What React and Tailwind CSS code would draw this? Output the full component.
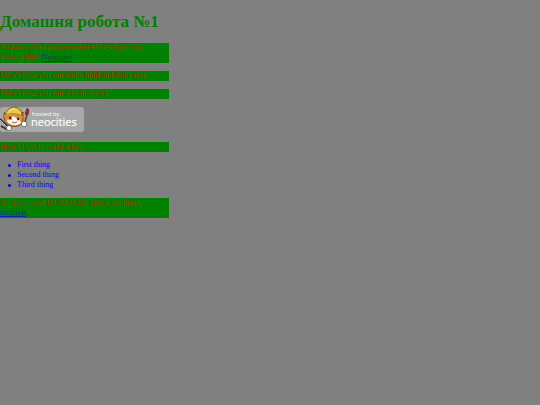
import React from "react";

const things = ["First thing", "Second thing", "Third thing"];

function Paragraph({ color = "text-[#a83000]", children }) {
  return <p className={`bg-[#008000] pr-3 ${color}`}>{children}</p>;
}

function NeocitiesBadge() {
  return (
    <svg viewBox="0 0 84 27" className="block h-[27px] w-[84px]">
      <rect x="0" y="0" width="84" height="25" rx="3" fill="#a9a9a9" />
      {/* tools in the left paw */}
      <path d="M0 12 L10 22 M1 19 L8 23" stroke="#333" strokeWidth="1.8" />
      <path d="M0 13 L9 22" stroke="#d8d8d8" strokeWidth="0.8" />
      {/* head */}
      <path
        d="M4 10 L4 6 L8 7 L20 8 L23 5 L23 11 Q24 17 18 19 Q12 21 7 17 Q4 15 4 10Z"
        fill="#e38a38"
        stroke="#5a3518"
        strokeWidth="0.8"
      />
      <path d="M12 10 Q14 8 16 11 Q21 13 21 16 Q17 19 13 18 Q7 17 7 13 Q9 12 12 13Z" fill="#fff6ea" />
      <ellipse cx="10" cy="11" rx="1" ry="1.4" fill="#2b1a10" />
      <ellipse cx="18" cy="12" rx="1" ry="1.4" fill="#2b1a10" />
      <path d="M12 15 Q14 17 17 15" stroke="#a4452c" strokeWidth="0.9" fill="none" />
      {/* hat */}
      <path d="M5 8 Q7 1 14 0 Q22 1 22 9 Q14 5 5 8Z" fill="#edc94a" stroke="#765015" strokeWidth="0.8" />
      <path d="M4 9 Q12 5 23 10" stroke="#d29a2a" strokeWidth="1.4" fill="none" />
      <path d="M9 4 Q12 1 15 2" stroke="#fbe68c" strokeWidth="1" fill="none" />
      {/* paws and brush */}
      <circle cx="9" cy="21" r="2.6" fill="#fff" stroke="#554838" strokeWidth="0.7" />
      <path d="M25 15 L27 7" stroke="#7a4a25" strokeWidth="1.8" />
      <path d="M25 7 L27 1 L29 3 L28 8Z" fill="#9c2a2a" stroke="#4b2020" strokeWidth="0.5" />
      <circle cx="24" cy="17" r="2.8" fill="#fff" stroke="#554838" strokeWidth="0.7" />
      <text x="32" y="9" fontSize="6" fill="#fff" fontFamily="Open Sans, sans-serif">
        hosted by
      </text>
      <text
        x="31"
        y="19"
        fontSize="11"
        fill="#fff"
        stroke="#fff"
        strokeWidth="0.2"
        fontFamily="Open Sans, sans-serif"
      >
        neocities
      </text>
    </svg>
  );
}

function App() {
  return (
    <div className="min-h-screen bg-[#808080] pt-3 font-['Liberation_Serif',serif] text-[8px] leading-[10px] text-[#0000ff]">
      <main className="flex w-[31.25%] flex-col gap-2">
        <h1 className="mb-[3px] text-[17px] leading-5 font-bold whitespace-nowrap text-[#008000]">
          Домашня робота №1
        </h1>
        <Paragraph>
          В цьому абзаці посилання Here's how you make a link:{" "}
          <a href="https://neocities.org" className="text-[#0030a8] underline">
            Neocities
          </a>
        </Paragraph>
        <Paragraph color="text-[#b82000]">
          Here's how you can make <strong>bold</strong> and <em>italic</em> text.
        </Paragraph>
        <Paragraph color="text-[#b82000]">Here's how you can add an image:</Paragraph>
        <NeocitiesBadge />
        <Paragraph>Here's how to make a list:</Paragraph>
        <ul className="pl-2">
          {things.map((thing) => (
            <li
              key={thing}
              className="flex items-center gap-1.5 before:size-[3px] before:rounded-full before:bg-[#0000ff]"
            >
              {thing}
            </li>
          ))}
        </ul>
        <Paragraph>
          To learn more HTML/CSS, check out these{" "}
          <a href="https://neocities.org/tutorials" className="text-[#0030a8] underline">
            tutorials
          </a>
          !
        </Paragraph>
      </main>
    </div>
  );
}

export default App;
